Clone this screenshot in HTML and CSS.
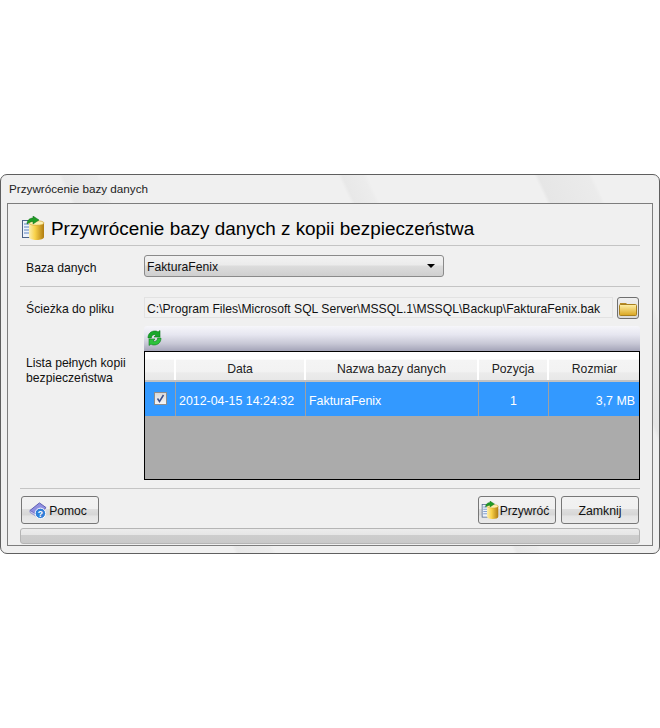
FILE: index.html
```html
<!DOCTYPE html>
<html lang="pl">
<head>
<meta charset="utf-8">
<title>Przywrócenie bazy danych</title>
<link rel="stylesheet" href="styles.css">
</head>
<body>
<svg class="defs" width="0" height="0" aria-hidden="true">
  <defs>
    <linearGradient id="gold" x1="0" x2="1" y1="0" y2="0">
      <stop offset="0" stop-color="#fbeeb0"/><stop offset=".4" stop-color="#f9d24a"/><stop offset="1" stop-color="#b07c10"/>
    </linearGradient>
    <linearGradient id="folder" x1="0" x2="0" y1="0" y2="1">
      <stop offset="0" stop-color="#fff0a8"/><stop offset="1" stop-color="#d9a520"/>
    </linearGradient>
    <symbol id="restore" viewBox="0 0 24 24">
      <rect x="1.500" y="4.500" width="9" height="17" fill="#eef3fb" stroke="#4d6488"/>
      <path d="M3 8h5M3 11h5M3 14h5M3 17h5" stroke="#5f86c0"/>
      <path d="M8 7v14c0 2 3.500 3 7.500 3s7.500-1 7.500-3V7z" fill="url(#gold)"/>
      <ellipse cx="15.500" cy="7" rx="7.500" ry="2.300" fill="#fdf0b0" stroke="#c9971c" stroke-width=".6"/>
      <path d="M6 8c0-4 3-6 6-6V0l6 4-6 4V5.500C10 5.500 8 6.500 6 8z" fill="#1f9c24" stroke="#0f6a18" stroke-width=".5"/>
    </symbol>
  </defs>
</svg>
<main class="window">
  <header class="titlebar">Przywrócenie bazy danych</header>
  <section class="panel">
    <h1 class="heading"><svg class="heading-icon"><use href="#restore"/></svg>Przywrócenie bazy danych z kopii bezpieczeństwa</h1>
    <div class="row row-db">
      <label class="label">Baza danych</label>
      <div class="combo"><span class="combo-text">FakturaFenix</span><i class="arrow"></i></div>
    </div>
    <div class="row row-path">
      <label class="label">Ścieżka do pliku</label>
      <div class="path-line">
        <div class="path-input">C:\Program Files\Microsoft SQL Server\MSSQL.1\MSSQL\Backup\FakturaFenix.bak</div>
        <button class="btn-folder" aria-label="Przeglądaj">
          <svg width="18" height="15" viewBox="0 0 18 15"><path d="M1 3V2h6l1 1h8v2H1z" fill="#b68a28"/><rect x=".5" y="3.500" width="17" height="11" rx="1" fill="url(#folder)" stroke="#a9801f"/></svg>
        </button>
      </div>
    </div>
    <div class="row row-list">
      <label class="label label-list">Lista pełnych kopii bezpieczeństwa</label>
      <div class="list">
        <div class="toolbar">
          <svg width="15" height="16" viewBox="0 0 15 16" aria-label="Odśwież"><path d="M1 8C1 3.500 4 1 8 1c1.500 0 2.500.4 3 1l2-1.500V7H7l2-2c-2-1-4.500 0-4.700 3z" fill="#18a82a" stroke="#0d7a1c" stroke-width=".6"/><path d="M14 8c0 4.500-3 7-7 7-1.500 0-2.500-.4-3-1l-2 1.500V9h6l-2 2c2 1 4.500 0 4.700-3z" fill="#2cc23c" stroke="#0d7a1c" stroke-width=".6"/></svg>
        </div>
        <div class="grid">
          <div class="grid-head">
            <div class="cell"></div>
            <div class="cell">Data</div>
            <div class="cell">Nazwa bazy danych</div>
            <div class="cell">Pozycja</div>
            <div class="cell cell-last">Rozmiar</div>
          </div>
          <div class="grid-row">
            <div class="cell"><span class="check"><svg width="9" height="9" viewBox="0 0 9 9"><path d="M1.500 4.500 3.500 7.500 7.500 1" fill="none" stroke="#3c4f8c" stroke-width="1.500"/></svg></span></div>
            <div class="cell cell-text cell-left">2012-04-15 14:24:32</div>
            <div class="cell cell-text cell-left">FakturaFenix</div>
            <div class="cell cell-text">1</div>
            <div class="cell cell-text cell-last cell-right">3,7 MB</div>
          </div>
        </div>
      </div>
    </div>
    <div class="actions">
      <button class="btn btn-shift">
        <svg width="19" height="19" viewBox="0 0 20 20"><path d="M1 10 11 2l7 5-9 8z" fill="#8f8fe0" stroke="#5a5ab0"/><path d="M1 10l8 5v2l-8-5z" fill="#c9c9f0" stroke="#6a6ac0" stroke-width=".6"/><circle cx="12" cy="13" r="5.500" fill="#2f7fd8" stroke="#fff"/><text class="help-mark" x="12" y="16.500">?</text></svg>
        <span class="btn-text">Pomoc</span>
      </button>
      <div class="actions-right">
        <button class="btn btn-shift"><svg class="btn-icon"><use href="#restore"/></svg><span class="btn-text">Przywróć</span></button>
        <button class="btn"><span class="btn-text">Zamknij</span></button>
      </div>
    </div>
    <div class="progress"></div>
  </section>
</main>
</body>
</html>
```
FILE: styles.css
```css
* { box-sizing: border-box; }
html, body { margin: 0; padding: 0; background: #fff; }
body { height: 728px; padding-top: 174px; font-family: "Liberation Sans", Arial, sans-serif; font-size: 12.200px; color: #111; }
.defs { position: absolute; }

.window {
  width: 660px; height: 380px; padding: 0 6px 7px;
  display: flex; flex-direction: column;
  border: 1px solid #5f5f5f; border-radius: 7px;
  background:
    linear-gradient(65deg, transparent 61.500%, #e8e8e8 62%, #ececec 64.500%, transparent 65%),
    linear-gradient(65deg, transparent 85%, #e6e6e6 85.500%, #ebebeb 91.500%, transparent 92%),
    linear-gradient(65deg, transparent 28%, #e8e8e8 28.500%, #ececec 32.500%, transparent 33%),
    #f0f0f0;
}
.titlebar { height: 28px; padding: 7px 2px 0; font-size: 11.700px; line-height: 13px; color: #222; flex: none; }
.panel {
  flex: 1; padding: 0 12px;
  border: 1px solid #7d7d7d; background: #f0f0f0;
  display: flex; flex-direction: column;
}
.heading {
  margin: 0; height: 42px; flex: none;
  display: flex; align-items: center; gap: 6px;
  padding: 8px 0 0 1px;
  font-size: 18.900px; font-weight: 400; color: #000;
  border-bottom: 1px solid #c4c4c4;
}
.heading-icon { width: 24px; height: 24px; flex: none; margin-top: -1px; }

.row { display: grid; grid-template-columns: 124px 496px; flex: none; }
.label { padding-left: 6px; line-height: 15px; }
.row-db { height: 41px; padding-top: 9px; align-items: start; border-bottom: 1px solid #c4c4c4; }
.row-db .label { padding-top: 6px; }
.row-path { height: 39px; padding-top: 10px; }
.row-path .label { padding-top: 5px; }
.row-list { height: 163px; border-bottom: 1px solid #c4c4c4; }
.label-list { padding-top: 30px; width: 110px; }

.combo {
  width: 300px; height: 22px; padding: 0 6px 0 2px;
  display: flex; align-items: center; justify-content: space-between;
  border: 1px solid #8a8a8a; border-radius: 3px;
  background: linear-gradient(#f2f2f2 0, #ebebeb 45%, #dcdcdc 50%, #cfcfcf 100%);
}
.combo-text { padding-top: 2px; }
.arrow { width: 0; height: 0; border: 4px solid transparent; border-top: 4px solid #000; border-bottom: 0; margin-right: 2px; }

.path-line { display: flex; gap: 4px; align-items: flex-start; }
.path-input {
  width: 469px; height: 21px; padding-left: 2px;
  border: 1px solid #e2e2e2; background: #f1f1f1;
  font-size: 12.150px; line-height: 22px; white-space: nowrap; overflow: hidden;
}
.btn-folder {
  width: 22px; height: 22px; padding: 0;
  display: flex; align-items: center; justify-content: center;
  border: 1px solid #6f6f6f; border-radius: 3px;
  background: linear-gradient(#efefef, #dadada);
}

.list { display: flex; flex-direction: column; }
.toolbar {
  height: 25px; padding: 4px 0 0 3px;
  border-radius: 3px 3px 0 0;
  background: linear-gradient(#f6f6fa 0, #e6e6f0 35%, #c8c8d6 70%, #a4a4b8 100%);
}
.grid {
  width: 496px; height: 129px;
  border: 1px solid #000; background: #ababab;
}
.grid-head, .grid-row {
  display: grid; grid-template-columns: 30px 130px 173px 70px 91px;
  padding-left: 1px;
}
.grid-head {
  height: 30px; color: #222;
  background: linear-gradient(#fff 0, #fff 26%, #f4f4f4 28%, #f2f2f2 72%, #ebebeb 74%, #e8e8e8 100%);
  border-bottom: 2px solid #c2c2c2;
}
.grid-head .cell { padding-top: 6px; border-right: 2px solid #fff; }
.grid-row { height: 34px; background: #3399ff; color: #fff; font-size: 12.400px; }
.grid-row .cell { border-right: 1px solid #a0a0a0; }
.cell { display: flex; align-items: center; justify-content: center; white-space: nowrap; }
.grid-row .cell-text { padding-top: 3px; }
.cell-left { justify-content: flex-start; padding-left: 3px; }
.cell-right { justify-content: flex-end; padding-right: 5px; }
.grid-head .cell-last, .grid-row .cell-last { border-right: 0; }
.check {
  width: 13px; height: 13px; margin-top: -2px; display: flex; align-items: center; justify-content: center;
  border: 1px solid #8d8d8d; background: linear-gradient(#d9d9d9, #f6f6f6);
}

.actions { height: 39px; padding-top: 7px; flex: none; display: flex; justify-content: space-between; align-items: flex-start; padding-left: 1px; }
.actions-right { display: flex; gap: 5px; margin-right: 1px; }
.btn {
  width: 78px; height: 28px; padding: 0;
  display: flex; align-items: center; justify-content: center; gap: 1px;
  border: 1px solid #777; border-radius: 3px;
  font-family: inherit; font-size: 12.300px; color: #111;
  background: linear-gradient(#f2f2f2 0, #f0f0f0 45%, #dedede 47%, #d6d6d6 70%, #e4e4e4 72%, #eaeaea 100%);
}
.btn-shift { padding-right: 4px; font-size: 12.100px; }
.btn-text { padding-top: 2px; }
.btn-icon { width: 18px; height: 18px; flex: none; }
.help-mark { font: 700 9px "Liberation Sans", sans-serif; fill: #fff; text-anchor: middle; }
.progress {
  height: 16px; flex: none;
  border: 1px solid #b5b5b5; border-radius: 3px;
  background: linear-gradient(#ececec 0, #e6e6e6 40%, #cdcdcd 45%, #c9c9c9 100%);
}
```
